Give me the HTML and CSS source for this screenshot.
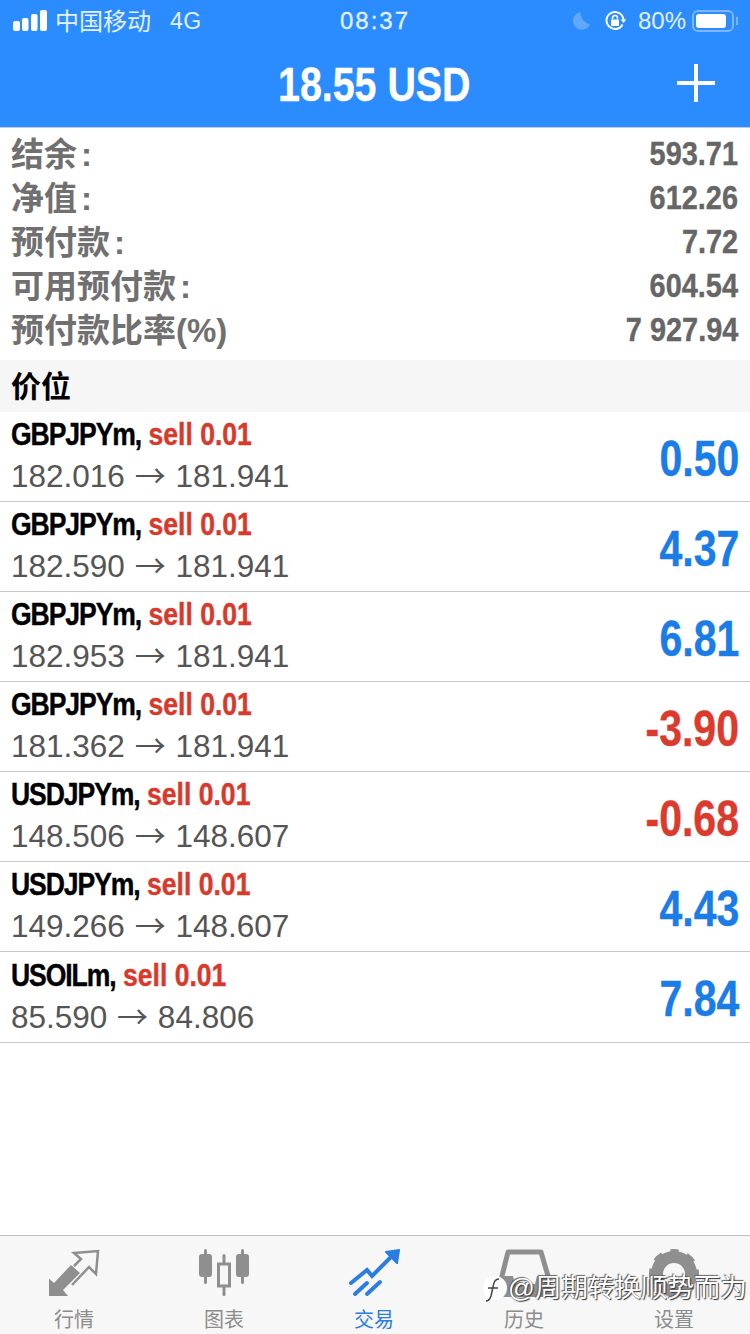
FILE: index.html
```html
<!DOCTYPE html>
<html lang="zh-CN">
<head>
    <meta charset="UTF-8">
    <title>交易</title>
    <link rel="stylesheet" href="styles.css">
</head>
<body>
<div class="app">
    <div class="top">
        <div class="status">
            <div class="status-left">
                <svg class="signal" width="34" height="21" viewBox="0 0 34 21"><rect x="0" y="11" width="7" height="10" rx="2"/><rect x="9" y="8" width="6.500" height="13" rx="2"/><rect x="18" y="4" width="6.500" height="17" rx="2"/><rect x="27" y="0" width="7" height="21" rx="2"/></svg>
                <span class="carrier">中国移动</span>
                <span class="net">4G</span>
            </div>
            <div class="clock">08:37</div>
            <div class="status-right">
                <svg class="moon" width="18" height="20" viewBox="0 0 20 20"><path d="M8 0a10 10 0 1 0 11 14A16 16 0 0 1 8 0z"/></svg>
                <svg class="lock" width="22" height="22" viewBox="0 0 22 22"><path d="M18.500 14.500A8.500 8.500 0 1 1 19.500 10" fill="none" stroke="#fff" stroke-width="2"/><path d="M16.500 9.500h6l-3 3.500z" fill="#fff"/><rect x="7" y="9.500" width="8" height="6.500" rx="1" fill="#fff"/><path d="M8.500 9.500V8a2.500 2.500 0 0 1 5 0v1.500" fill="none" stroke="#fff" stroke-width="1.500"/></svg>
                <span class="pct">80%</span>
                <div class="battery"><div class="battery-fill"></div></div>
                <div class="battery-tip"></div>
            </div>
        </div>
        <div class="title-bar">
            <h1 class="title"><span class="cond title-text">18.55 USD</span></h1>
            <svg class="plus" width="38" height="38" viewBox="0 0 38 38"><path d="M19 0v38M0 19h38" stroke="#fff" stroke-width="4"/></svg>
        </div>
    </div>

    <div class="summary">
        <div class="sum-row"><span class="sum-label">结余<span class="colon">:</span></span><span class="cond cond-r sum-value">593.71</span></div>
        <div class="sum-row"><span class="sum-label">净值<span class="colon">:</span></span><span class="cond cond-r sum-value">612.26</span></div>
        <div class="sum-row"><span class="sum-label">预付款<span class="colon">:</span></span><span class="cond cond-r sum-value">7.72</span></div>
        <div class="sum-row"><span class="sum-label">可用预付款<span class="colon">:</span></span><span class="cond cond-r sum-value">604.54</span></div>
        <div class="sum-row"><span class="sum-label">预付款比率(%)</span><span class="cond cond-r sum-value">7 927.94</span></div>
    </div>

    <div class="section">价位</div>

    <div class="orders">
        <div class="order">
            <div class="order-info">
                <div class="order-head"><span class="cond"><b class="sym">GBPJPYm,</b> <b class="side">sell 0.01</b></span></div>
                <div class="order-price">182.016 <span class="arrow">→</span> 181.941</div>
            </div>
            <span class="cond cond-r profit">0.50</span>
        </div>
        <div class="order">
            <div class="order-info">
                <div class="order-head"><span class="cond"><b class="sym">GBPJPYm,</b> <b class="side">sell 0.01</b></span></div>
                <div class="order-price">182.590 <span class="arrow">→</span> 181.941</div>
            </div>
            <span class="cond cond-r profit">4.37</span>
        </div>
        <div class="order">
            <div class="order-info">
                <div class="order-head"><span class="cond"><b class="sym">GBPJPYm,</b> <b class="side">sell 0.01</b></span></div>
                <div class="order-price">182.953 <span class="arrow">→</span> 181.941</div>
            </div>
            <span class="cond cond-r profit">6.81</span>
        </div>
        <div class="order">
            <div class="order-info">
                <div class="order-head"><span class="cond"><b class="sym">GBPJPYm,</b> <b class="side">sell 0.01</b></span></div>
                <div class="order-price">181.362 <span class="arrow">→</span> 181.941</div>
            </div>
            <span class="cond cond-r profit loss">-3.90</span>
        </div>
        <div class="order">
            <div class="order-info">
                <div class="order-head"><span class="cond"><b class="sym">USDJPYm,</b> <b class="side">sell 0.01</b></span></div>
                <div class="order-price">148.506 <span class="arrow">→</span> 148.607</div>
            </div>
            <span class="cond cond-r profit loss">-0.68</span>
        </div>
        <div class="order">
            <div class="order-info">
                <div class="order-head"><span class="cond"><b class="sym">USDJPYm,</b> <b class="side">sell 0.01</b></span></div>
                <div class="order-price">149.266 <span class="arrow">→</span> 148.607</div>
            </div>
            <span class="cond cond-r profit">4.43</span>
        </div>
        <div class="order">
            <div class="order-info">
                <div class="order-head"><span class="cond"><b class="sym">USOILm,</b> <b class="side">sell 0.01</b></span></div>
                <div class="order-price">85.590 <span class="arrow">→</span> 84.806</div>
            </div>
            <span class="cond cond-r profit">7.84</span>
        </div>
    </div>

    <div class="tabs">
        <div class="tab">
            <svg width="52" height="48" viewBox="2 0 52 48"><path d="M1 47V29l6 5L24 16l9 8-17 17 5 6z" fill="#8f8f8f"/><path d="M27 17l7-7-7-6 24-2-2 23-7-7-17 18" fill="none" stroke="#8f8f8f" stroke-width="2.500"/></svg>
            <span class="tab-label">行情</span>
        </div>
        <div class="tab">
            <svg width="52" height="48" viewBox="1 0 52 48"><g fill="#8f8f8f"><rect x="6" y="0" width="3" height="35" rx="1.500"/><rect x="1" y="5" width="13" height="23" rx="3"/><rect x="43" y="0" width="3" height="35" rx="1.500"/><rect x="38" y="5" width="13" height="23" rx="3"/><rect x="24.500" y="5" width="3" height="42" rx="1.500"/></g><rect x="20.500" y="15" width="11" height="22" fill="#f7f7f7" stroke="#8f8f8f" stroke-width="3"/></svg>
            <span class="tab-label">图表</span>
        </div>
        <div class="tab tab-on">
            <svg width="52" height="48" viewBox="0 0 52 48"><g fill="none" stroke="#2a7de1" stroke-width="4" stroke-linecap="round"><path d="M2 34l16-13 5 6 23-23"/><path d="M6 45l12-11"/><path d="M18 45l13-12"/></g><path d="M37 3l13-2-2 13z" fill="#2a7de1" stroke="#2a7de1" stroke-width="2" stroke-linejoin="round"/></svg>
            <span class="tab-label">交易</span>
        </div>
        <div class="tab">
            <svg width="52" height="48" viewBox="0 0 52 48"><path d="M9 3H42L49 27V46H3V27Z" fill="none" stroke="#8f8f8f" stroke-width="5" stroke-linejoin="round"/><path d="M3 27h11l2 8h20l2-8h11v19H3z" fill="#8f8f8f"/></svg>
            <span class="tab-label">历史</span>
        </div>
        <div class="tab">
            <svg width="52" height="48" viewBox="0 0 52 48"><circle cx="25" cy="25" r="17" fill="none" stroke="#8f8f8f" stroke-width="12"/><circle cx="25" cy="25" r="21" fill="none" stroke="#8f8f8f" stroke-width="8" stroke-dasharray="8.500 8" stroke-dashoffset="4.250" transform="rotate(-90 25 25)"/></svg>
            <span class="tab-label">设置</span>
        </div>
    </div>

    <div class="mark">
        <svg width="26" height="30" viewBox="0 0 26 30"><circle cx="13" cy="14" r="12" fill="#fff"/><path d="M17 5c-4 0-5 3-6 8l-2 9c-1 3-3 5-5 5M6 14h10" fill="none" stroke="#444" stroke-width="1.500"/></svg>
        <span class="mark-text">@周期转换顺势而为</span>
    </div>
</div>
</body>
</html>
```
FILE: styles.css
```css
* {
    margin: 0;
    box-sizing: border-box;
}

body {
    width: 750px;
    height: 1334px;
    overflow: hidden;
    background: #fff;
    font-family: "Liberation Sans", "Noto Sans CJK SC", sans-serif;
}

.app {
    position: relative;
    width: 750px;
    height: 1334px;
    display: flex;
    flex-direction: column;
}

/* condensed bold: no narrow family installed, so squeeze it */
.cond {
    display: inline-block;
    font-weight: bold;
    white-space: nowrap;
    transform: scaleX(.83);
    transform-origin: left center;
    -webkit-text-stroke: .4px;
}

.cond-r {
    transform-origin: right center;
}

.top {
    height: 128px;
    background: #2b8cff;
    border-bottom: 1px solid #c4cbd3;
    color: #fff;
}

.status {
    height: 42px;
    padding: 0 12px 0 13px;
    display: flex;
    align-items: center;
    justify-content: space-between;
    font-size: 24px;
    color: #e3f0ff;
}

.status-left {
    width: 250px;
    display: flex;
    align-items: center;
}

.signal {
    fill: #fff;
    margin-top: -2px;
}

.carrier {
    margin: 0 0 4px 8px;
}

.net {
    margin-left: 19px;
    font-size: 23px;
    letter-spacing: .5px;
}

.clock {
    font-size: 24px;
    letter-spacing: 2px;
    margin-right: 1px;
    -webkit-text-stroke: .3px;
}

.status-right {
    width: 250px;
    display: flex;
    align-items: center;
    justify-content: flex-end;
}

.moon {
    fill: #5fa8ff;
    margin-right: 13px;
}

.lock {
    margin-right: 12px;
}

.pct {
    margin-right: 6px;
}

.battery {
    width: 42px;
    height: 22px;
    border: 2px solid #7db6ff;
    border-radius: 6px;
    padding: 2px;
}

.battery-fill {
    width: 30px;
    height: 14px;
    background: #fff;
    border-radius: 3px;
}

.battery-tip {
    width: 2px;
    height: 8px;
    margin-left: 2px;
    background: #7db6ff;
}

.title-bar {
    position: relative;
    height: 85px;
    display: flex;
    align-items: center;
    justify-content: center;
}

.title {
    font-size: 48px;
    width: 194px;
    white-space: nowrap;
}

.title-text {
    transform: scaleX(.82);
}

.plus {
    position: absolute;
    right: 35px;
    top: 22px;
}

.summary {
    padding: 4px 12px 8px 11px;
}

.sum-row {
    height: 44px;
    display: flex;
    align-items: center;
    justify-content: space-between;
    color: #666;
    font-size: 34px;
}

.sum-label {
    font-size: 33px;
    font-weight: bold;
    color: #707070;
    margin-bottom: 4px;
}

.sum-value {
    transform: scaleX(.85);
    margin-bottom: 2px;
}

.colon {
    margin-left: 4px;
}

.section {
    height: 52px;
    padding: 0 0 4px 11px;
    display: flex;
    align-items: center;
    background: #f6f6f6;
    color: #000;
    font-size: 30px;
    font-weight: bold;
}

.order {
    height: 90px;
    padding: 0 11px;
    display: flex;
    align-items: center;
    justify-content: space-between;
    border-bottom: 1px solid #c8c8c8;
}

.order:last-child {
    height: 91px;
}

.order-info {
    display: flex;
    flex-direction: column;
    gap: 6px;
    margin-bottom: 3px;
}

.order-head {
    font-size: 32px;
    line-height: 36px;
}

.sym {
    color: #000;
    letter-spacing: -1.300px;
}

.side {
    color: #d8392b;
}

.order-price {
    font-size: 31.500px;
    line-height: 36px;
    color: #555;
}

.arrow {
    font-family: "Noto Sans CJK SC", sans-serif;
    font-size: 31px;
    line-height: 30px;
    margin: 0 1px;
}

.profit {
    font-size: 50px;
    color: #1a7ce6;
    transform: scaleX(.82);
    margin-top: 4px;
}

.loss {
    color: #dc3a2c;
}

.tabs {
    position: absolute;
    left: 0;
    right: 0;
    bottom: 0;
    height: 99px;
    display: flex;
    background: #f7f7f7;
    border-top: 1px solid #bdbdbd;
}

.tab {
    flex: 1;
    padding-top: 13px;
    display: flex;
    flex-direction: column;
    align-items: center;
    color: #8c8c8c;
    font-size: 20px;
}

.tab-label {
    margin: 11px 2px 0 0;
    line-height: 24px;
}

.tab-on {
    color: #2a7de1;
}

.mark {
    position: absolute;
    left: 482px;
    top: 1272px;
    display: flex;
    align-items: center;
}

.mark-text {
    font-size: 26.500px;
    line-height: 32px;
    margin-bottom: 2px;
    color: #fff;
    white-space: nowrap;
    text-shadow: 1px 1px 1px #333, -1px -1px 1px #666;
}
```
